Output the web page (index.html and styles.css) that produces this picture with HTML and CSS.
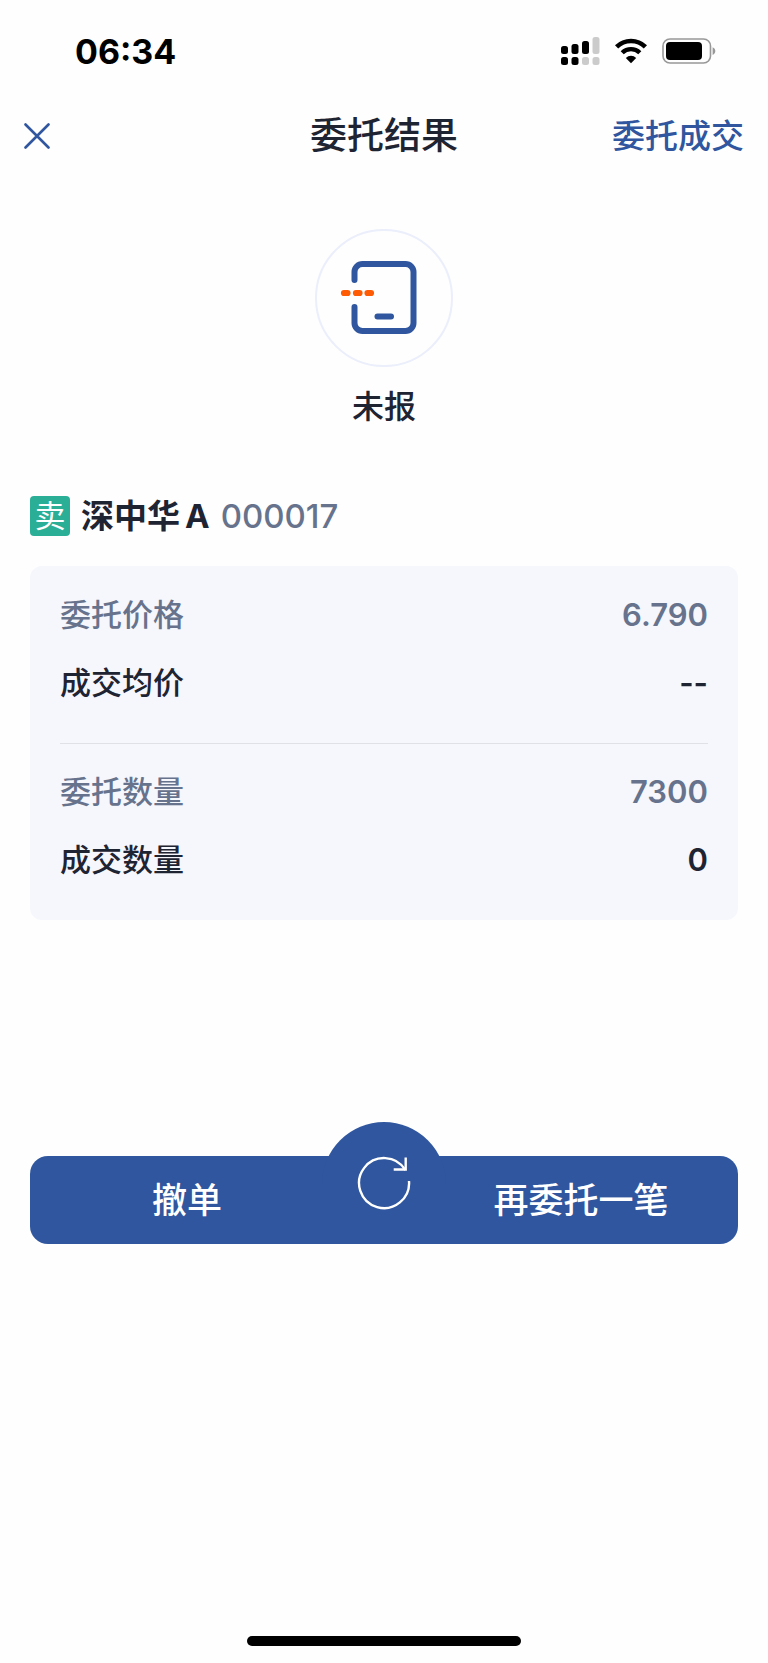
FILE: index.html
```html
<!DOCTYPE html>
<html lang="zh-CN">
<head>
<meta charset="UTF-8">
<meta name="viewport" content="width=device-width, initial-scale=1.0">
<title>委托结果</title>
<link rel="stylesheet" href="styles.css">
</head>
<body>

<div class="page">
    <div class="status-bar">
        <span class="time">06:34</span>
        <div class="status-icons">
            <svg class="signal" width="39" height="28" viewBox="0 0 39 28">
                <g fill="#000">
                    <rect x="0" y="9" width="7" height="8" rx="2.5"/>
                    <rect x="10.5" y="7" width="7" height="10" rx="2.5"/>
                    <rect x="21" y="4" width="7" height="13" rx="2.5"/>
                    <rect x="0" y="20" width="7" height="8" rx="2.5"/>
                    <rect x="10.5" y="20" width="7" height="8" rx="2.5"/>
                </g>
                <g fill="#cbcbcb">
                    <rect x="31.5" y="0" width="7" height="17" rx="2.5"/>
                    <rect x="21" y="20" width="7" height="8" rx="2.5"/>
                    <rect x="31.5" y="20" width="7" height="8" rx="2.5"/>
                </g>
            </svg>
            <svg class="wifi" width="34" height="26" viewBox="0 0 34 26">
                <path d="M2.6 8.8a20.6 20.6 0 0 1 28.8 0" fill="none" stroke="#000" stroke-width="4.6"/>
                <path d="M8.2 14.7a12.6 12.6 0 0 1 17.6 0" fill="none" stroke="#000" stroke-width="4.4"/>
                <path d="M17 25.2l-5.2-5.3a7.6 7.6 0 0 1 10.4 0z" fill="#000"/>
            </svg>
            <svg class="battery" width="54" height="26" viewBox="0 0 54 26">
                <rect x="1" y="1" width="47.5" height="24" rx="7" fill="none" stroke="#989898" stroke-width="1.6"/>
                <rect x="4" y="4" width="36" height="18" rx="4" fill="#000"/>
                <path d="M50.6 9.2c3.6 1.4 3.6 6.4 0 7.8z" fill="#989898"/>
            </svg>
        </div>
    </div>

    <header class="navbar">
        <button class="btn-close" type="button" aria-label="关闭">
            <svg width="26" height="26" viewBox="0 0 26 26">
                <path d="M1.5 1.5l23 23M24.5 1.5l-23 23" stroke="#2f569e" stroke-width="2.6" stroke-linecap="round"/>
            </svg>
        </button>
        <h1>委托结果</h1>
        <a class="nav-link" href="#">委托成交</a>
    </header>

    <main>
        <section class="result">
            <div class="result-icon">
                <svg width="78" height="76" viewBox="0 0 78 76" fill="none" stroke-linecap="round">
                    <path d="M14.5 20v-8a8 8 0 0 1 8-8h43a8 8 0 0 1 8 8v51a8 8 0 0 1-8 8h-43a8 8 0 0 1-8-8V47" stroke="#2f569e" stroke-width="6"/>
                    <path d="M37.500 56.500h13.500" stroke="#2f569e" stroke-width="6"/>
                    <path d="M4 33h3.500M16 33h3.500M27.500 33h3.500" stroke="#ff5b05" stroke-width="6.200"/>
                </svg>
            </div>
            <p class="result-text">未报</p>
        </section>

        <div class="stock">
            <span class="tag sell">卖</span>
            <span class="stock-name"><span>深中华</span><span>A</span></span>
            <span class="stock-code">000017</span>
        </div>

        <div class="card">
            <dl class="group">
                <div class="row order">
                    <dt>委托价格</dt>
                    <dd>6.790</dd>
                </div>
                <div class="row">
                    <dt>成交均价</dt>
                    <dd>--</dd>
                </div>
            </dl>
            <dl class="group">
                <div class="row order">
                    <dt>委托数量</dt>
                    <dd>7300</dd>
                </div>
                <div class="row">
                    <dt>成交数量</dt>
                    <dd>0</dd>
                </div>
            </dl>
        </div>

        <div class="actions">
            <button class="btn" type="button">撤单</button>
            <button class="btn" type="button">再委托一笔</button>
            <!-- 刷新按钮 -->
            <button class="btn-refresh" type="button" aria-label="刷新">
                <svg width="54" height="54" viewBox="0 0 54 54" fill="none" stroke="#fff" stroke-width="2.4">
                    <path d="M52 25A25 25 0 1 1 48.400 14"/>
                    <path d="M48.700 1.500v12h-12"/>
                </svg>
            </button>
        </div>
    </main>

    <div class="home-indicator"></div>
</div>

</body>
</html>
```
FILE: styles.css
```css
* {
    box-sizing: border-box;
}
body {
    margin: 0;
    background-color: #fefefe;
    color: #1f2433;
    font-family: Inter, "Noto Sans CJK SC", sans-serif;
    font-weight: 500;
}
h1, p, dl, dd {
    margin: 0;
}
button {
    padding: 0;
    border: 0;
    background: none;
    color: inherit;
    font: inherit;
    cursor: pointer;
}
svg {
    display: block;
}
.page {
    display: flex;
    flex-direction: column;
    min-height: 100vh;
}

/* 状态栏 */
.status-bar {
    display: flex;
    justify-content: space-between;
    align-items: center;
    height: 102px;
    padding: 0 52px 0 75px;
}
.time {
    color: #000;
    font-size: 34px;
    font-weight: 700;
}
.status-icons {
    display: flex;
    align-items: center;
    gap: 14px;
}

/* 导航栏 */
.navbar {
    display: grid;
    grid-template-columns: 1fr auto 1fr;
    align-items: center;
    height: 68px;
    padding: 0 24px;
}
.btn-close {
    justify-self: start;
}
.navbar h1 {
    font-size: 37px;
    font-weight: 500;
    line-height: 48px;
}
.nav-link {
    justify-self: end;
    color: #2f569e;
    font-size: 33px;
    line-height: 48px;
    text-decoration: none;
}

main {
    padding: 0 30px;
}
.result {
    display: flex;
    flex-direction: column;
    align-items: center;
    padding-top: 59px;
}
.result-icon {
    display: flex;
    justify-content: center;
    align-items: center;
    width: 138px;
    height: 138px;
    padding-right: 10px;
    border: 2px solid #ebeefb;
    border-radius: 50%;
}
.result-text {
    margin-top: 16px;
    font-size: 32px;
    line-height: 48px;
}

.stock {
    display: flex;
    align-items: center;
    margin-top: 61px;
    height: 48px;
    font-size: 33px;
    line-height: 48px;
}
.tag {
    width: 40px;
    height: 40px;
    margin-right: 11px;
    border-radius: 4px;
    color: #fff;
    font-size: 31px;
    font-weight: 400;
    line-height: 40px;
    text-align: center;
}
.sell {
    background-color: #2bae96;
}
.stock-name {
    display: flex;
    gap: 5px;
    margin-right: 11px;
    font-weight: 700;
}
.stock-code {
    color: #67738c;
}

/* 委托明细 */
.card {
    margin-top: 26px;
    padding: 0 30px;
    border-radius: 12px;
    background-color: #f5f7fc;
}
.group {
    padding: 15px 0 26px;
}
.group + .group {
    padding-top: 14px;
    border-top: 1px solid #dfe1e6;
}
.row {
    display: flex;
    justify-content: space-between;
    align-items: center;
    height: 68px;
    font-size: 31px;
    line-height: 40px;
}
.row dd {
    font-weight: 600;
}
.order {
    color: #67738c;
}

/* 底部操作 */
.actions {
    position: relative;
    display: grid;
    grid-template-columns: 1fr 1fr;
    column-gap: 80px;
    margin-top: 236px;
    border-radius: 18px;
    background-color: #2f569e;
    color: #fff;
}
.btn {
    height: 88px;
    font-size: 35px;
    line-height: 48px;
}
.btn-refresh {
    position: absolute;
    top: -34px;
    left: 50%;
    display: flex;
    justify-content: center;
    align-items: center;
    width: 124px;
    height: 122px;
    margin-left: -62px;
    border-radius: 62px 62px 0 0;
    background-color: #2f569e;
}

.home-indicator {
    width: 274px;
    height: 10px;
    margin: auto auto 17px;
    border-radius: 5px;
    background-color: #000;
}
```
